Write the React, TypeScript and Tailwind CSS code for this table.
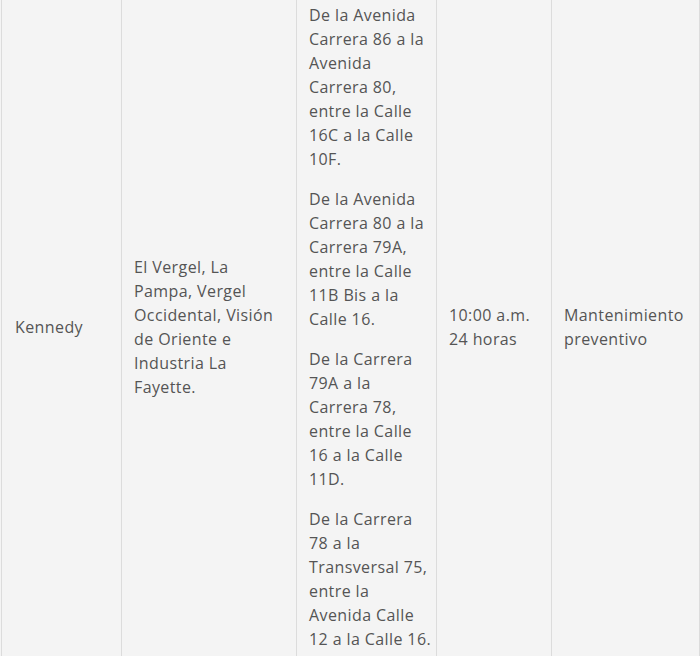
import React from 'react';

const tramos = [
  ['De la Avenida', 'Carrera 86 a la', 'Avenida', 'Carrera 80,', 'entre la Calle', '16C a la Calle', '10F.'],
  ['De la Avenida', 'Carrera 80 a la', 'Carrera 79A,', 'entre la Calle', '11B Bis a la', 'Calle 16.'],
  ['De la Carrera', '79A a la', 'Carrera 78,', 'entre la Calle', '16 a la Calle', '11D.'],
  ['De la Carrera', '78 a la', 'Transversal 75,', 'entre la', 'Avenida Calle', '12 a la Calle 16.'],
];

const barrios = ['El Vergel, La', 'Pampa, Vergel', 'Occidental, Visión', 'de Oriente e', 'Industria La', 'Fayette.'];

const Lines = ({ lines }: { lines: string[] }) => (
  <>
    {lines.map((l, i) => (
      <span key={i} className="block whitespace-nowrap">
        {l}
      </span>
    ))}
  </>
);

const App = () => {
  return (
    <div className="w-[700px] h-[656px] overflow-hidden bg-[#f4f4f4]">
      <div className="-mt-[10px] pl-[1px]">
        <table
          className="table-fixed border-collapse text-[16px] leading-[24px] tracking-[0.4px] text-[#555] w-[698px]"
          style={{ fontFamily: '"Open Sans", "Liberation Sans", sans-serif' }}
        >
          <colgroup>
            <col className="w-[120px]" />
            <col className="w-[175px]" />
            <col className="w-[140px]" />
            <col className="w-[115px]" />
            <col className="w-[148px]" />
          </colgroup>
          <tbody>
            <tr>
              <td className="border border-[#dcdcdc] px-3 py-3 align-middle">
                <span className="pl-[1px]">Kennedy</span>
              </td>
              <td className="border border-[#dcdcdc] px-3 py-3 align-middle">
                <Lines lines={barrios} />
              </td>
              <td className="border border-[#dcdcdc] px-3 py-3 align-middle">
                <div className="flex flex-col gap-4">
                  {tramos.map((t, i) => (
                    <p key={i}>
                      <Lines lines={t} />
                    </p>
                  ))}
                </div>
              </td>
              <td className="border border-[#dcdcdc] px-3 py-3 align-middle">
                <Lines lines={['10:00 a.m.', '24 horas']} />
              </td>
              <td className="border border-[#dcdcdc] px-3 py-3 align-middle">
                <Lines lines={['Mantenimiento', 'preventivo']} />
              </td>
            </tr>
          </tbody>
        </table>
      </div>
    </div>
  );
};

export default App;
